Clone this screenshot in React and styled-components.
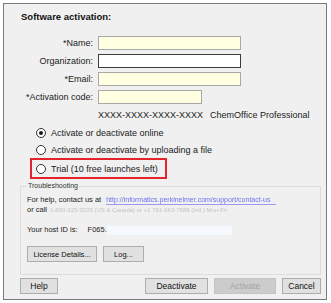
import React from "react";
import styled, { createGlobalStyle } from "styled-components";

const Global = createGlobalStyle`
  html, body { margin: 0; padding: 0; background: #ffffff; }
  body { font-family: "Liberation Sans", Arial, sans-serif; color: #000; }
  * { box-sizing: border-box; }
`;

const Window = styled.div`
  margin: 3px 0 0 3px;
  width: 324px;
  height: 297px;
  border: 1px solid #7a7a7a;
  background: #f0f0f0;
  display: flex;
  flex-direction: column;
  padding: 7px 4px 5px 0;
`;

const Title = styled.div`
  margin-left: 17px;
  font-size: 9.5px;
  font-weight: bold;
  line-height: 12px;
  color: #111;
`;

const FormGrid = styled.div`
  margin-top: 13px;
  display: grid;
  grid-template-columns: 89px 143px;
  grid-auto-rows: 14px;
  column-gap: 5px;
  row-gap: 4px;
  align-items: center;
`;

const Label = styled.label`
  justify-self: end;
  font-size: 9px;
  line-height: 11px;
  color: #1a1a1a;
  white-space: nowrap;
`;

const Field = styled.div`
  height: 14px;
  width: ${(p) => (p.$short ? "104px" : "143px")};
  background: ${(p) => (p.$required ? "#ffffe1" : "#ffffff")};
  border: 1px solid ${(p) => (p.$focused ? "#3c3c3c" : "#a8a8a8")};
`;

const CodeHint = styled.div`
  grid-column: 2;
  display: flex;
  gap: 7px;
  font-size: 9px;
  line-height: 11px;
  color: #222;
  white-space: nowrap;
`;

const RadioList = styled.div`
  margin: 2px 0 0 26px;
  display: flex;
  flex-direction: column;
  align-items: flex-start;
`;

const RadioRow = styled.div`
  display: flex;
  align-items: center;
  gap: 5px;
  height: ${(p) => p.$h || 18}px;
  padding-left: ${(p) => (p.$inset ? 4 : 6)}px;
  font-size: 9px;
  color: #1a1a1a;
  white-space: nowrap;
`;

const Radio = styled.span`
  position: relative;
  flex: none;
  width: 10px;
  height: 10px;
  border-radius: 50%;
  border: 1px solid #333;
  background: #fff;
  &::after {
    content: "";
    display: ${(p) => (p.$checked ? "block" : "none")};
    position: absolute;
    left: 2px;
    top: 2px;
    width: 4px;
    height: 4px;
    border-radius: 50%;
    background: #1b1b1b;
  }
`;

const Highlight = styled.div`
  border: 2px solid #e3242b;
  padding-right: 7px;
`;

const Group = styled.fieldset`
  margin: 3px 0 0 16px;
  padding: 5px 6px 12px 6px;
  border: 1px solid #dcdcdc;
  min-width: 0;
  width: 301px;
`;

const Legend = styled.legend`
  margin-left: 0;
  padding: 0 1px;
  font-size: 7px;
  line-height: 8px;
  color: #333;
`;

const SmallLine = styled.div`
  display: flex;
  align-items: center;
  gap: ${(p) => p.$gap || 5}px;
  font-size: 7.5px;
  line-height: 10px;
  color: #222;
  white-space: nowrap;
  margin-top: ${(p) => p.$mt || 0}px;
`;

const LinkText = styled.span`
  display: inline-block;
  width: 170px;
  overflow: hidden;
  font-size: 7px;
  line-height: 8px;
  color: #6f6ff2;
  border-bottom: 1px solid #9a9af0;
  filter: blur(0.5px);
`;

const Faint = styled.span`
  font-size: 6px;
  color: #c4c4c4;
  filter: blur(0.5px);
`;

const HiddenBox = styled.span`
  display: inline-block;
  width: 125px;
  height: 9px;
  background: #f5f8fc;
`;

const HostValue = styled.span`
  display: flex;
  align-items: center;
`;

const ButtonRow = styled.div`
  display: flex;
  gap: ${(p) => p.$gap || 6}px;
  margin-top: ${(p) => p.$mt || 0}px;
`;

const Button = styled.button`
  height: ${(p) => p.$h || 16}px;
  width: ${(p) => p.$w}px;
  padding: 0;
  border: 1px solid ${(p) => (p.disabled ? "#c4c4c4" : "#adadad")};
  background: ${(p) => (p.disabled ? "#cccccc" : "#e1e1e1")};
  color: ${(p) => (p.disabled ? "#a3a3a3" : "#111")};
  font-family: "Liberation Sans", Arial, sans-serif;
  font-size: ${(p) => p.$fs || 8.5}px;
`;

const Footer = styled.div`
  margin: auto 0 0 16px;
  display: flex;
  gap: 6px;
  width: 301px;
`;

const Spacer = styled.div`
  flex: 1;
`;

export default function App() {
  return (
    <>
      <Global />
      <Window>
        <Title>Software activation:</Title>
        <FormGrid>
          <Label>*Name:</Label>
          <Field $required />
          <Label>Organization:</Label>
          <Field $focused />
          <Label>*Email:</Label>
          <Field $required />
          <Label>*Activation code:</Label>
          <Field $required $short />
          <CodeHint>
            <span>XXXX-XXXX-XXXX-XXXX</span>
            <span>ChemOffice Professional</span>
          </CodeHint>
        </FormGrid>
        <RadioList>
          <RadioRow>
            <Radio $checked />
            Activate or deactivate online
          </RadioRow>
          <RadioRow $h={16}>
            <Radio />
            Activate or deactivate by uploading a file
          </RadioRow>
          <Highlight>
            <RadioRow $h={17} $inset>
              <Radio />
              Trial (10 free launches left)
            </RadioRow>
          </Highlight>
        </RadioList>
        <Group>
          <Legend>Troubleshooting</Legend>
          <SmallLine>
            For help, contact us at
            <LinkText>http://informatics.perkinelmer.com/support/contact-us</LinkText>
          </SmallLine>
          <SmallLine $gap={3}>
            or call
            <Faint>1-800-325-3535 (US &amp; Canada) or +1 781-663-7888 (Intl.) Mon-Fri</Faint>
          </SmallLine>
          <SmallLine $mt={10} $gap={10}>
            Your host ID is:
            <HostValue>
              F065.
              <HiddenBox />
            </HostValue>
          </SmallLine>
          <ButtonRow $mt={11}>
            <Button $w={70} $fs={7.5}>License Details...</Button>
            <Button $w={41} $fs={7.5}>Log...</Button>
          </ButtonRow>
        </Group>
        <Footer>
          <Button $w={38} $h={16}>Help</Button>
          <Spacer />
          <Button $w={63} $h={16}>Deactivate</Button>
          <Button $w={62} $h={16} disabled>Activate</Button>
          <Button $w={39} $h={16}>Cancel</Button>
        </Footer>
      </Window>
    </>
  );
}
